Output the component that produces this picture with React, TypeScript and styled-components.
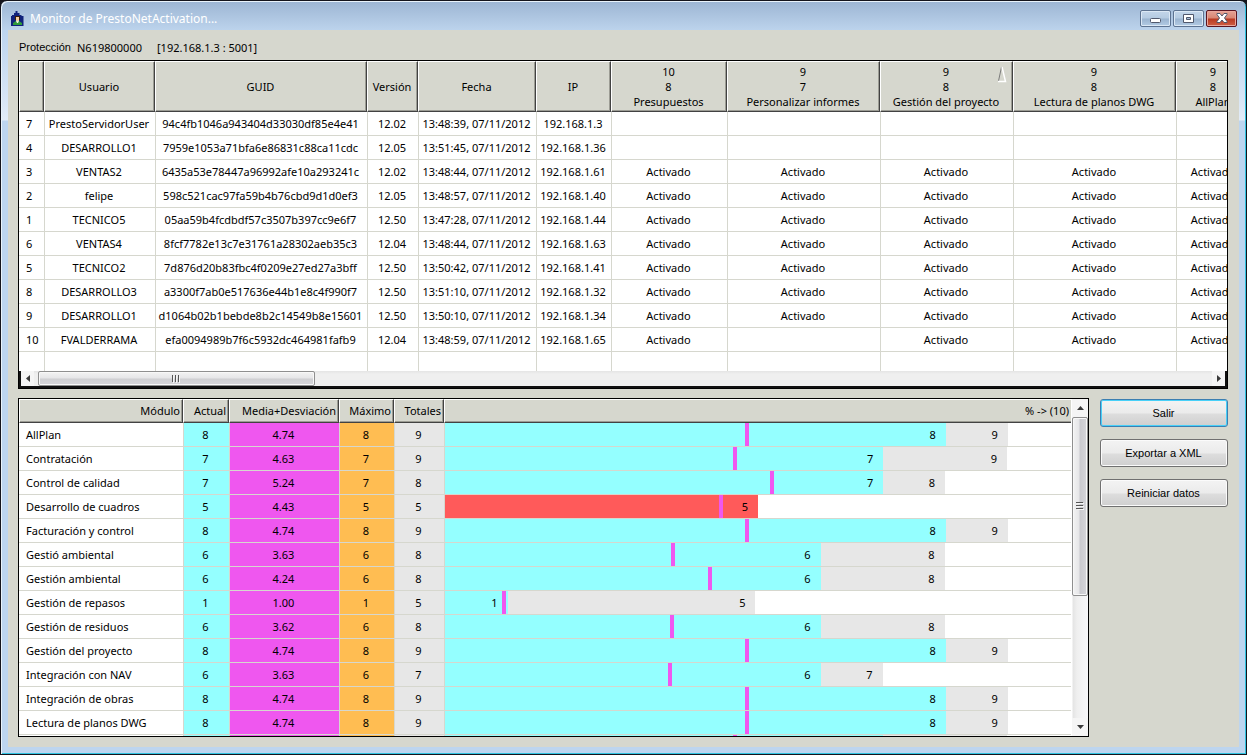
import React from "react";
import styled, { createGlobalStyle, css } from "styled-components";

const GlobalStyle = createGlobalStyle`
  *, *::before, *::after { box-sizing: border-box; }
  body {
    margin: 0;
    background: #14141c;
    color: #000;
    font: 11px/15px "Noto Sans", "Open Sans", sans-serif;
  }
  button { font: inherit; color: inherit; padding: 0; margin: 0; }
`;

const face = "#d6d7ce";
const grid = "#d6d7ce";
const cyan = "#94ffff";
const magenta = "#ef57ef";
const orange = "#ffbd52";
const grey = "#e7e7e7";
const red = "#ff5a5a";

/* ---------- window frame ---------- */

const Window = styled.div`
  display: flex;
  flex-direction: column;
  height: 100vh;
  padding: 0 7px 7px 6px;
  border: 1px solid #14141c;
  border-radius: 7px 7px 0 0;
  background:
    linear-gradient(#9cb5d3, #bcd3ec 29px, transparent 29px),
    linear-gradient(#bdd5ef 30px, #d9e6f6 100px, #e2ecf8 119px, #bdd5ef 120px);
  box-shadow: inset 1px 1px 0 #e9f3fb, inset -1px -1px 0 #2fc3e0;
`;

const TitleBar = styled.header`
  display: flex;
  align-items: center;
  gap: 5px;
  flex: none;
  height: 29px;
  padding: 5px 2px 0 3px;
`;

const Title = styled.h1`
  flex: 1;
  margin: 0;
  padding-top: 2px;
  color: #fff;
  font-size: 12px;
  font-weight: 400;
  line-height: 16px;
`;

const WindowButtons = styled.div`
  display: flex;
  gap: 2px;
`;

const WindowButton = styled.button<{ $close?: boolean }>`
  display: flex;
  align-items: center;
  justify-content: center;
  width: 31px;
  height: 17px;
  border: 1px solid ${(p) => (p.$close ? "#5a1420" : "#5d7391")};
  border-radius: 2px;
  box-shadow: inset 0 0 0 1px ${(p) => (p.$close ? "#e9a79c" : "#dbe8f5")};
  background: ${(p) =>
    p.$close
      ? "linear-gradient(#e5a294 0, #d98674 7px, #b93a22 8px, #cf5f44 100%)"
      : "linear-gradient(#c3d6ea 0, #b5cbe2 7px, #9ab4d0 8px, #b3cbe4 100%)"};
`;

const Client = styled.main`
  display: flex;
  flex-direction: column;
  flex: 1;
  min-height: 0;
  margin: 0 0 0 1px;
  padding: 0 11px 10px 10px;
  background: ${face};
`;

const Info = styled.p`
  display: flex;
  align-items: center;
  height: 30px;
  flex: none;
  margin: 0;
  padding: 5px 1px 0;
`;

const InfoLabel = styled.span`
  margin-right: 6px;
  font-family: "Liberation Sans", sans-serif;
`;

const InfoSerial = styled.span`
  margin-right: 15px;
`;

/* ---------- tables ---------- */

const Panel = styled.section`
  min-width: 0;
  border: 1px solid #000;
  background: #fff;
  overflow: hidden;
`;

const GridTable = styled.table`
  table-layout: fixed;
  border-collapse: separate;
  border-spacing: 0;
`;

const HeadCell = styled.th<{ $tall?: boolean }>`
  position: relative;
  height: ${(p) => (p.$tall ? 51 : 24)}px;
  padding: ${(p) => (p.$tall ? "0 1px 0 0" : "0 2px 2px 0")};
  border: solid;
  border-width: 1px;
  border-color: #fff #424242 #424242 #fff;
  box-shadow: inset -1px -1px 0 #9c9c94;
  background: ${face};
  font-weight: 400;
  text-align: ${(p) => (p.$tall ? "center" : "right")};
  white-space: pre-line;
`;

const OpenHeadCell = styled(HeadCell)`
  border-right: 0;
  box-shadow: inset 0 -1px 0 #9c9c94;
`;

const SortMark = styled.svg`
  position: absolute;
  top: 4px;
  right: 5px;
`;

const cell = css`
  height: 24px;
  border-bottom: 1px solid ${grid};
  border-left: 1px solid ${grid};
  text-align: center;
  white-space: nowrap;
`;

const Cell = styled.td<{ $fill?: string }>`
  ${cell}
  padding: 0 2px 0 0;
  background: ${(p) => p.$fill || "#fff"};
`;

const BarCell = styled.td`
  ${cell}
  padding: 0;
`;

const LeadCell = styled.th`
  ${cell}
  padding: 0 0 0 7px;
  border-left: 0;
  background: #fff;
  font-weight: 400;
  text-align: left;
`;

const TailRow = styled.tr`
  td {
    height: 19px;
    border-bottom: 0;
  }
  td:first-child {
    border-left: 0;
  }
`;

/* ---------- usage panel ---------- */

const Lower = styled.div`
  display: flex;
  flex: 1;
  gap: 11px;
  min-height: 0;
  margin-top: 9px;
`;

const UsagePanel = styled(Panel)`
  display: flex;
  flex: 1;
`;

const UsageView = styled.div`
  flex: 1;
  min-width: 0;
  overflow: hidden;
`;

const UsageTable = styled(GridTable)`
  width: 100%;
`;

const Track = styled.div`
  position: relative;
  display: flex;
  height: 23px;
`;

const Bar = styled.div<{ $fill: string }>`
  flex: none;
  padding-right: 10px;
  background: ${(p) => p.$fill};
  line-height: 23px;
  text-align: right;
`;

const Marker = styled.div`
  position: absolute;
  top: 0;
  bottom: 0;
  width: 4px;
  background: ${magenta};
`;

/* ---------- scroll bars ---------- */

const HScroll = styled.div`
  display: flex;
  height: 17px;
  border: solid #101010;
  border-width: 0 2px 2px;
  background: linear-gradient(#e4e4e4, #efefef 3px, #efefef);
`;

const VScroll = styled.div`
  display: flex;
  flex-direction: column;
  flex: none;
  width: 17px;
  padding-left: 1px;
  background: linear-gradient(90deg, #fff 1px, #e4e4e4 2px, #efefef 6px, #f7f7f9);
`;

const ScrollButton = styled.button<{ $w: number; $h: number }>`
  display: flex;
  align-items: center;
  justify-content: center;
  flex: none;
  width: ${(p) => p.$w}px;
  height: ${(p) => p.$h}px;
  border: 0;
  background: #f5f5f5;
`;

const HThumb = styled.div`
  display: flex;
  align-items: center;
  justify-content: center;
  width: 23%;
  margin-left: 4px;
  border: 1px solid #8f8f8f;
  border-radius: 2px;
  box-shadow: inset 0 0 0 1px #f8f8f8;
  background: linear-gradient(#f3f3f3 0, #e6e6e8 6px, #cfcfd2 7px, #d6d6da 100%);
`;

const VThumb = styled.div`
  display: flex;
  align-items: center;
  justify-content: center;
  height: 53%;
  border: 1px solid #8f8f8f;
  border-radius: 2px;
  box-shadow: inset 0 0 0 1px #f8f8f8;
  background: linear-gradient(90deg, #f3f3f3 0, #e6e6e8 6px, #c9c9ce 7px, #d6d6da 100%);
`;

const Spacer = styled.div`
  flex: 1;
`;

/* ---------- command buttons ---------- */

const Commands = styled.nav`
  display: flex;
  flex-direction: column;
  flex: none;
  gap: 12px;
  width: 128px;
  padding-top: 1px;
`;

const Command = styled.button<{ $default?: boolean }>`
  height: 28px;
  padding-right: 1px;
  border: 1px solid ${(p) => (p.$default ? "#3c7fb1" : "#707070")};
  border-radius: 3px;
  box-shadow: inset 0 0 0 1px ${(p) => (p.$default ? "#48d0f8" : "#fbfbfb")};
  background: linear-gradient(#f3f3f3 0, #ebebeb 13px, #dddddd 14px, #cfcfcf 100%);
  font-family: "Liberation Sans", sans-serif;
`;

/* ---------- data ---------- */

const clientWidths = [25, 111, 212, 51, 118, 75, 116, 153, 133, 163, 75];

const clientHeads = [
  "",
  "Usuario",
  "GUID",
  "Versión",
  "Fecha",
  "IP",
  "10\n8\nPresupuestos",
  "9\n7\nPersonalizar informes",
  "9\n8\nGestión del proyecto",
  "9\n8\nLectura de planos DWG",
  "9\n8\nAllPlan",
];

const sortedColumn = 8;

// Each entry: number, user, GUID, version, time, last IP octet, one flag per module.
const clients: [string, string, string, string, string, string, string][] = [
  ["7", "PrestoServidorUser", "94c4fb1046a943404d33030df85e4e41", "12.02", "13:48:39", "3", "00000"],
  ["4", "DESARROLLO1", "7959e1053a71bfa6e86831c88ca11cdc", "12.05", "13:51:45", "36", "00000"],
  ["3", "VENTAS2", "6435a53e78447a96992afe10a293241c", "12.02", "13:48:44", "61", "11111"],
  ["2", "felipe", "598c521cac97fa59b4b76cbd9d1d0ef3", "12.05", "13:48:57", "40", "11111"],
  ["1", "TECNICO5", "05aa59b4fcdbdf57c3507b397cc9e6f7", "12.50", "13:47:28", "44", "11111"],
  ["6", "VENTAS4", "8fcf7782e13c7e31761a28302aeb35c3", "12.04", "13:48:44", "63", "11111"],
  ["5", "TECNICO2", "7d876d20b83fbc4f0209e27ed27a3bff", "12.50", "13:50:42", "41", "11111"],
  ["8", "DESARROLLO3", "a3300f7ab0e517636e44b1e8c4f990f7", "12.50", "13:51:10", "32", "11111"],
  ["9", "DESARROLLO1", "d1064b02b1bebde8b2c14549b8e15601", "12.50", "13:50:10", "34", "11111"],
  ["10", "FVALDERRAMA", "efa0094989b7f6c5932dc464981fafb9", "12.04", "13:48:59", "65", "10111"],
];

type Usage = { name: string; now: number; mean: string; total: number; mark: number };

const usages: Usage[] = [
  { name: "AllPlan", now: 8, mean: "4.74", total: 9, mark: 47.9 },
  { name: "Contratación", now: 7, mean: "4.63", total: 9, mark: 46 },
  { name: "Control de calidad", now: 7, mean: "5.24", total: 8, mark: 51.9 },
  { name: "Desarrollo de cuadros", now: 5, mean: "4.43", total: 5, mark: 43.8 },
  { name: "Facturación y control", now: 8, mean: "4.74", total: 9, mark: 47.9 },
  { name: "Gestió ambiental", now: 6, mean: "3.63", total: 8, mark: 36.1 },
  { name: "Gestión ambiental", now: 6, mean: "4.24", total: 8, mark: 42 },
  { name: "Gestión de repasos", now: 1, mean: "1.00", total: 5, mark: 9.1 },
  { name: "Gestión de residuos", now: 6, mean: "3.62", total: 8, mark: 35.9 },
  { name: "Gestión del proyecto", now: 8, mean: "4.74", total: 9, mark: 47.9 },
  { name: "Integración con NAV", now: 6, mean: "3.63", total: 7, mark: 35.6 },
  { name: "Integración de obras", now: 8, mean: "4.74", total: 9, mark: 47.9 },
  { name: "Lectura de planos DWG", now: 8, mean: "4.74", total: 9, mark: 47.9 },
];

/* ---------- drawings ---------- */

const AppIcon = () => (
  <svg width="15" height="15" viewBox="0 0 15 15" aria-hidden="true">
    <path d="M5.500 0h2v2h2v2h2v1h2v10H1V5h1V4h2V2h1.500z" fill="#10217b" />
    <path d="M5 5h5v4H5z" fill="#3a1c08" />
    <path d="M6 6h3v4H6z" fill="#f2cfa4" />
    <path d="M3 14v-2l3-2h3l3 2v2z" fill="#2f9a3a" />
    <path d="M6 10h3l-1 2h-1z" fill="#e8f4e0" />
  </svg>
);

const Arrow = ({ d, w, h }: { d: string; w: number; h: number }) => (
  <svg width={w} height={h} viewBox={`0 0 ${w} ${h}`} aria-hidden="true">
    <path d={d} fill="#3a3a3a" />
  </svg>
);

const Grip = ({ vertical }: { vertical?: boolean }) => (
  <svg width="8" height="8" viewBox="0 0 8 8" aria-hidden="true" shapeRendering="crispEdges">
    <g transform={vertical ? "matrix(0 1 1 0 0 0)" : undefined}>
      <path d="M0 0h1v7H0zM3 0h1v7H3zM6 0h1v7H6z" fill="#555" />
      <path d="M1 1h1v7H1zM4 1h1v7H4zM7 1h1v7H7z" fill="#f6f6f6" />
    </g>
  </svg>
);

/* ---------- parts ---------- */

function ClientGrid() {
  return (
    <Panel>
      <GridTable style={{ width: clientWidths.reduce((a, b) => a + b, 0) }}>
        <colgroup>
          {clientWidths.map((w, i) => (
            <col key={i} style={{ width: w }} />
          ))}
        </colgroup>
        <thead>
          <tr>
            {clientHeads.map((h, i) => (
              <HeadCell key={i} $tall scope="col">
                {h}
                {i === sortedColumn && (
                  <SortMark width="10" height="17" viewBox="0 0 10 17" aria-hidden="true">
                    <path d="M4.500 1L1.500 15" stroke="#7b7b7b" fill="none" />
                    <path d="M5 1L8.500 15.500H1" stroke="#fff" strokeWidth="1.500" fill="none" />
                  </SortMark>
                )}
              </HeadCell>
            ))}
          </tr>
        </thead>
        <tbody>
          {clients.map(([n, user, guid, version, time, ip, flags]) => (
            <tr key={n}>
              <LeadCell scope="row">{n}</LeadCell>
              <Cell>{user}</Cell>
              <Cell>{guid}</Cell>
              <Cell>{version}</Cell>
              <Cell>{time}, 07/11/2012</Cell>
              <Cell>192.168.1.{ip}</Cell>
              {flags.split("").map((f, i) => (
                <Cell key={i}>{f === "1" ? "Activado" : ""}</Cell>
              ))}
            </tr>
          ))}
          <TailRow>
            {clientWidths.map((_, i) => (
              <Cell key={i} />
            ))}
          </TailRow>
        </tbody>
      </GridTable>
      <HScroll>
        <ScrollButton $w={13} $h={15} aria-label="Desplazar a la izquierda">
          <Arrow w={4} h={7} d="M4 0v7L0 3.5z" />
        </ScrollButton>
        <HThumb><Grip /></HThumb>
        <Spacer />
        <ScrollButton $w={13} $h={15} aria-label="Desplazar a la derecha">
          <Arrow w={4} h={7} d="M0 0v7l4-3.5z" />
        </ScrollButton>
      </HScroll>
    </Panel>
  );
}

function UsageBars({ now, total, mark, labels = true }: { now: number; total: number; mark: number; labels?: boolean }) {
  const idle = total - now;
  return (
    <Track>
      <Bar $fill={idle ? cyan : red} style={{ width: `${now * 10}%` }}>{labels && now}</Bar>
      {idle > 0 && (
        <Bar $fill={grey} style={{ width: `${idle * 9.9}%` }}>{labels && total}</Bar>
      )}
      <Marker style={{ left: `${mark}%` }} />
    </Track>
  );
}

function UsageGrid() {
  return (
    <UsagePanel>
      <UsageView>
        <UsageTable>
          <colgroup>
            <col style={{ width: 164 }} />
            <col style={{ width: 46 }} />
            <col style={{ width: 110 }} />
            <col style={{ width: 55 }} />
            <col style={{ width: 50 }} />
            <col />
          </colgroup>
          <thead>
            <tr>
              <HeadCell scope="col">Módulo</HeadCell>
              <HeadCell scope="col">Actual</HeadCell>
              <HeadCell scope="col">Media+Desviación</HeadCell>
              <HeadCell scope="col">Máximo</HeadCell>
              <HeadCell scope="col">Totales</HeadCell>
              <OpenHeadCell scope="col">% -&gt; (10)</OpenHeadCell>
            </tr>
          </thead>
          <tbody>
            {usages.map((u) => (
              <tr key={u.name}>
                <LeadCell scope="row">{u.name}</LeadCell>
                <Cell $fill={cyan}>{u.now}</Cell>
                <Cell $fill={magenta}>{u.mean}</Cell>
                <Cell $fill={orange}>{u.now}</Cell>
                <Cell $fill={grey}>{u.total}</Cell>
                <BarCell><UsageBars now={u.now} total={u.total} mark={u.mark} /></BarCell>
              </tr>
            ))}
            <tr>
              <LeadCell as="td" />
              <Cell $fill={cyan} />
              <Cell $fill={magenta} />
              <Cell $fill={orange} />
              <Cell $fill={grey} />
              <BarCell><UsageBars now={7} total={9} mark={46} labels={false} /></BarCell>
            </tr>
          </tbody>
        </UsageTable>
      </UsageView>
      <VScroll>
        <ScrollButton $w={16} $h={18} aria-label="Desplazar hacia arriba">
          <Arrow w={7} h={4} d="M0 4h7L3.5 0z" />
        </ScrollButton>
        <VThumb><Grip vertical /></VThumb>
        <Spacer />
        <ScrollButton $w={16} $h={18} aria-label="Desplazar hacia abajo">
          <Arrow w={7} h={4} d="M0 0h7L3.5 4z" />
        </ScrollButton>
      </VScroll>
    </UsagePanel>
  );
}

export default function App() {
  return (
    <>
      <GlobalStyle />
      <Window>
        <TitleBar>
          <AppIcon />
          <Title>Monitor de PrestoNetActivation...</Title>
          <WindowButtons>
            <WindowButton aria-label="Minimizar">
              <svg width="12" height="9" viewBox="0 0 12 9" aria-hidden="true">
                <rect x="0.5" y="4.5" width="10" height="4" rx="1" fill="#fff" stroke="#50586c" />
              </svg>
            </WindowButton>
            <WindowButton aria-label="Maximizar">
              <svg width="12" height="9" viewBox="0 0 12 9" aria-hidden="true">
                <path
                  d="M0.5 0.5h10v8h-10zM3.5 3.5v2h4v-2z"
                  fill="#fff"
                  stroke="#50586c"
                  fillRule="evenodd"
                />
              </svg>
            </WindowButton>
            <WindowButton aria-label="Cerrar" $close>
              <svg width="12" height="10" viewBox="0 0 12 10" aria-hidden="true">
                <path
                  d="M1 0.5h3L6 3l2-2.5h3v1L8.5 5 11 8.5v1H8L6 7 4 9.500H1v-1L3.500 5 1 1.500z"
                  fill="#fff"
                  stroke="#50586c"
                />
              </svg>
            </WindowButton>
          </WindowButtons>
        </TitleBar>
        <Client>
          <Info>
            <InfoLabel>Protección</InfoLabel>
            <InfoSerial>N619800000</InfoSerial>
            <span>[192.168.1.3 : 5001]</span>
          </Info>
          <ClientGrid />
          <Lower>
            <UsageGrid />
            <Commands>
              <Command $default>Salir</Command>
              <Command>Exportar a XML</Command>
              <Command>Reiniciar datos</Command>
            </Commands>
          </Lower>
        </Client>
      </Window>
    </>
  );
}
